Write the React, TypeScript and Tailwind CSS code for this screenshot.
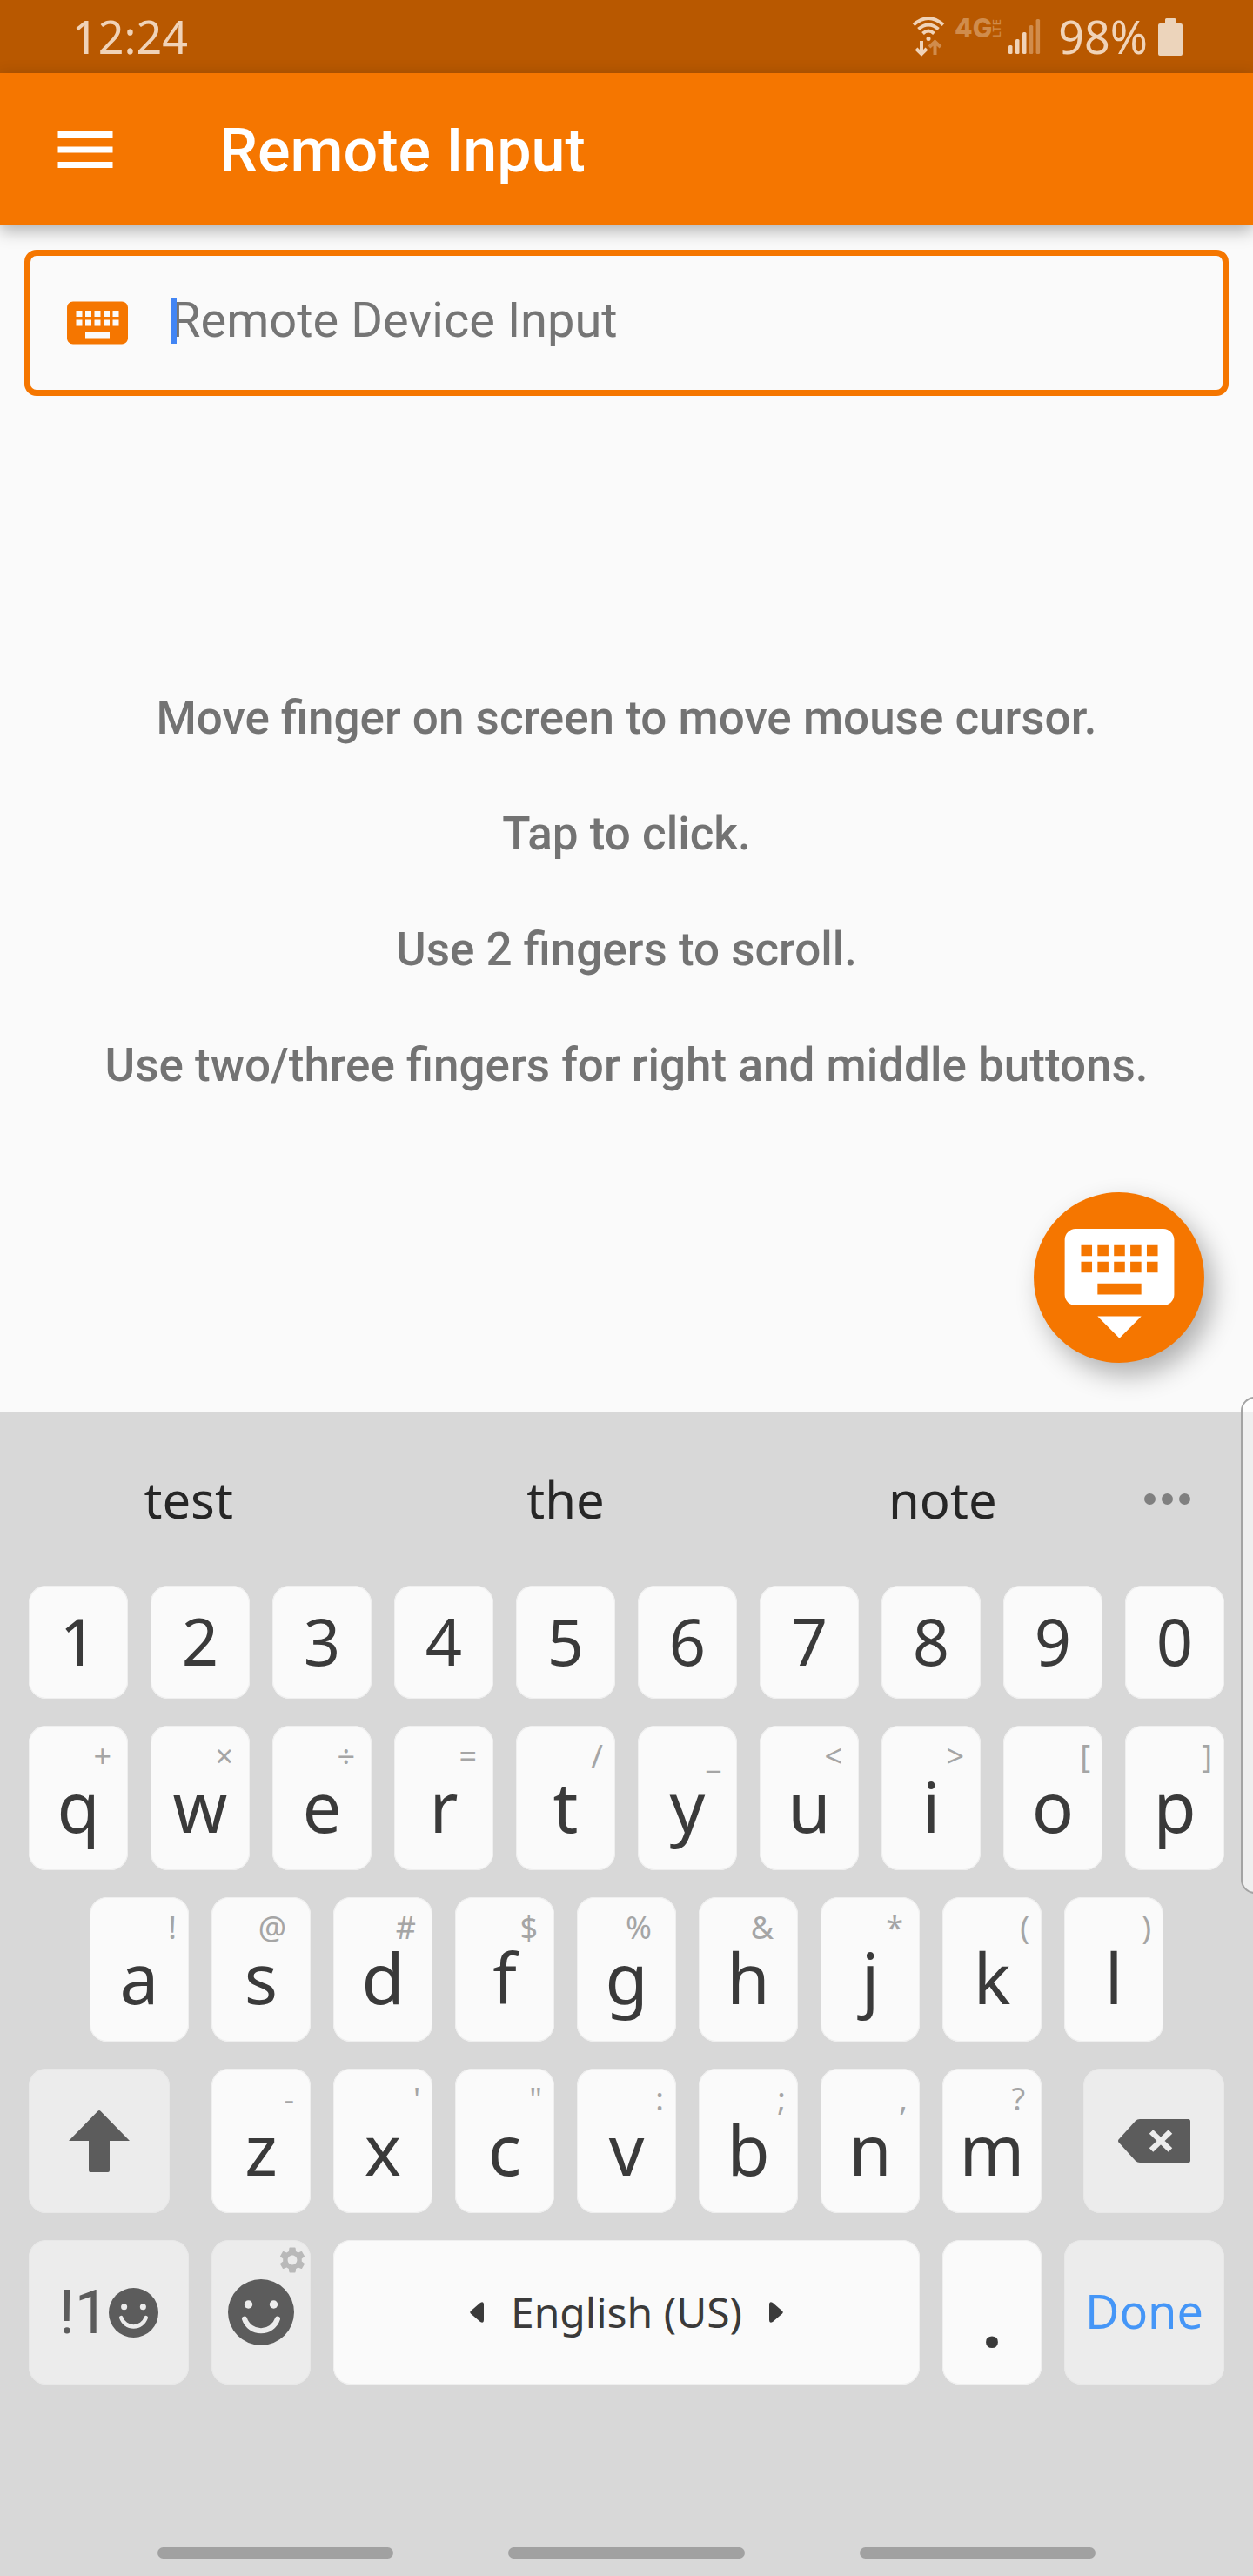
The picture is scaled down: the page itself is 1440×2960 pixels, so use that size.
import React from "react";
import { MdKeyboard, MdKeyboardHide, MdMenu, MdSettings } from "react-icons/md";

type LetterKey = { label: string; hint?: string };

const digits = ["1", "2", "3", "4", "5", "6", "7", "8", "9", "0"];

const topRow: LetterKey[] = [
  { label: "q", hint: "+" },
  { label: "w", hint: "×" },
  { label: "e", hint: "÷" },
  { label: "r", hint: "=" },
  { label: "t", hint: "/" },
  { label: "y", hint: "_" },
  { label: "u", hint: "<" },
  { label: "i", hint: ">" },
  { label: "o", hint: "[" },
  { label: "p", hint: "]" },
];

const homeRow: LetterKey[] = [
  { label: "a", hint: "!" },
  { label: "s", hint: "@" },
  { label: "d", hint: "#" },
  { label: "f", hint: "$" },
  { label: "g", hint: "%" },
  { label: "h", hint: "&" },
  { label: "j", hint: "*" },
  { label: "k", hint: "(" },
  { label: "l", hint: ")" },
];

const bottomRow: LetterKey[] = [
  { label: "z", hint: "-" },
  { label: "x", hint: "'" },
  { label: "c", hint: '"' },
  { label: "v", hint: ":" },
  { label: "b", hint: ";" },
  { label: "n", hint: "," },
  { label: "m", hint: "?" },
];

const instructions = [
  "Move finger on screen to move mouse cursor.",
  "Tap to click.",
  "Use 2 fingers to scroll.",
  "Use two/three fingers for right and middle buttons.",
];

// Hints sit further from the key's edge the wider their glyph is.
function hintInset(hint: string) {
  if ("@%&".includes(hint)) return "right-[28px]";
  if ("!/[]():;,'\"".includes(hint)) return "right-[14px]";
  return "right-[19px]";
}

function Letter({ label, hint }: LetterKey) {
  return (
    <button
      type="button"
      className="relative flex h-[166px] min-w-0 flex-[114_1_0%] items-center justify-center rounded-[20px] bg-[#fafafa] pt-[18px] text-[80px] leading-none text-[#3a3a3a] inset-ring inset-ring-[#efefef]"
    >
      {hint && (
        <span className={`absolute top-[17px] text-[36px] leading-none text-[#a5a5a5] ${hintInset(hint)}`}>{hint}</span>
      )}
      {label === "." ? <b>.</b> : label}
    </button>
  );
}

function Smiley({ className }: { className: string }) {
  return (
    <svg viewBox="0 0 76 76" className={className} aria-hidden="true">
      <circle cx="38" cy="38" r="38" fill="#5c5c5c" />
      <circle cx="23.5" cy="29" r="4.7" fill="#ececec" />
      <circle cx="52.5" cy="29" r="4.7" fill="#ececec" />
      <path d="M19 45.500A20 20 0 0 0 57 45.500" fill="none" stroke="#ececec" strokeWidth="6" strokeLinecap="round" />
    </svg>
  );
}

function WifiIcon() {
  return (
    <svg viewBox="0 0 38 48" className="h-[48px] w-[38px]" aria-label="Wi-Fi">
      <g fill="none" stroke="#f0d3b8" strokeWidth="4">
        <path d="M2 10.500Q19 -4.500 36 10.500" />
        <path d="M7.500 15.500Q19 5.500 30.500 15.500" />
        <path d="M12.500 20.500Q19 14.500 25.500 20.500" />
      </g>
      <circle cx="19" cy="26.500" r="2.500" fill="#f0d3b8" />
      <path d="M11 29V44M5 38L11 44L17 38" fill="none" stroke="#f0d3b8" strokeWidth="4" />
      <path d="M26.500 45V31M20 36L26.500 30L33 36" fill="none" stroke="#d08c4c" strokeWidth="4" />
    </svg>
  );
}

function SignalIcon() {
  return (
    <svg viewBox="0 0 38 42" className="h-[42px] w-[38px]" aria-label="Signal strength">
      <rect x="1" y="31" width="4.500" height="10" rx="1.500" fill="#f0d3b8" />
      <rect x="9" y="24" width="4.500" height="17" rx="1.500" fill="#f0d3b8" />
      <rect x="17" y="16" width="4.500" height="25" rx="1.500" fill="#f0d3b8" />
      <rect x="24.800" y="8" width="4.500" height="33" rx="1.500" fill="#d08c4c" />
      <rect x="32.600" y="1" width="4.500" height="40" rx="1.500" fill="#d08c4c" />
    </svg>
  );
}

function StatusBar() {
  return (
    <div className="flex h-[84px] items-center justify-between bg-[#b85800] pr-[81px] pl-[83px] font-['Noto_Sans'] text-[52px] leading-none text-[#f0d3b8]">
      <span>12:24</span>
      <div className="flex items-center">
        <WifiIcon />
        <span className="ml-[11px] flex items-center pb-[20px] text-[#d08c4c]">
          <span className="font-['Inter'] text-[30px] leading-none font-extrabold">4G</span>
          <span className="rotate-180 font-['Inter'] text-[12px] leading-none font-medium [writing-mode:vertical-rl]">LTE</span>
        </span>
        <span className="ml-[6px]">
          <SignalIcon />
        </span>
        <span className="ml-[20px]">98%</span>
        <svg viewBox="0 0 28 43" className="ml-[12px] h-[43px] w-[28px]" aria-label="Battery">
          <path
            d="M8 1.500Q8 0 9.500 0H19Q20.500 0 20.500 1.500V6H26Q28 6 28 8V41Q28 43 26 43H2Q0 43 0 41V8Q0 6 2 6H8Z"
            fill="#ecd4bb"
          />
        </svg>
      </div>
    </div>
  );
}

function Keyboard() {
  const row = "flex gap-[26px]";
  const softKey =
    "relative flex h-[166px] items-center justify-center rounded-[20px] bg-[#ececec] inset-ring inset-ring-[#e8e8e8]";
  return (
    <section aria-label="Keyboard" className="bg-[#d8d8d8] font-['Noto_Sans',sans-serif]">
      <div className="flex h-[200px] items-center text-[58px] text-[#262626]">
        {["test", "the", "note"].map((word) => (
          <button key={word} type="button" className="min-w-0 flex-1">
            {word}
          </button>
        ))}
        <button type="button" aria-label="More suggestions" className="mr-[56px] flex w-[84px] justify-center gap-[7px]">
          <span className="size-[13px] rounded-full bg-[#808080]" />
          <span className="size-[13px] rounded-full bg-[#808080]" />
          <span className="size-[13px] rounded-full bg-[#808080]" />
        </button>
      </div>

      <div className="flex flex-col gap-[31px] px-[33px]">
        <div className={row}>
          {digits.map((digit) => (
            <button
              key={digit}
              type="button"
              className="flex h-[130px] min-w-0 flex-1 items-center justify-center rounded-[20px] bg-[#fafafa] pb-[3px] text-[74px] leading-none text-[#3a3a3a] inset-ring inset-ring-[#efefef]"
            >
              {digit}
            </button>
          ))}
        </div>

        <div className={row}>
          {topRow.map((key) => (
            <Letter key={key.label} {...key} />
          ))}
        </div>

        <div className={row}>
          <span className="flex-[44_1_0%]" />
          {homeRow.map((key) => (
            <Letter key={key.label} {...key} />
          ))}
          <span className="flex-[44_1_0%]" />
        </div>

        <div className={row}>
          <button type="button" aria-label="Shift" className={`${softKey} mr-[22px] flex-[162_1_0%]`}>
            <svg viewBox="0 0 70 71" className="h-[71px] w-[70px]" aria-hidden="true">
              <path
                d="M33.500 0.700Q35 -0.500 36.500 0.700L70 35H47V69Q47 71 45 71H25Q23 71 23 69V35H0Z"
                fill="#5c5c5c"
              />
            </svg>
          </button>
          {bottomRow.map((key) => (
            <Letter key={key.label} {...key} />
          ))}
          <button type="button" aria-label="Backspace" className={`${softKey} ml-[22px] flex-[162_1_0%]`}>
            <svg viewBox="0 0 83 50" className="h-[50px] w-[83px]" aria-hidden="true">
              <path
                d="M0.500 26.500Q-0.500 25 0.500 23.500L20 2Q22 0 25 0H80.500Q83 0 83 2.500V47.500Q83 50 80.500 50H25Q22 50 20 48Z"
                fill="#5c5c5c"
              />
              <path d="M38 14.500L60 35.500M60 14.500L38 35.500" stroke="#ececec" strokeWidth="6.500" />
            </svg>
          </button>
        </div>

        <div className={row}>
          <button
            type="button"
            aria-label="Symbols and emoji"
            className={`${softKey} flex-[184_1_0%] font-['Roboto'] text-[70px] leading-none text-[#5c5c5c]`}
          >
            !1
            <Smiley className="size-[57px]" />
          </button>
          <button type="button" aria-label="Emoji" className={`${softKey} flex-[114_1_0%]`}>
            <MdSettings className="absolute top-[5px] right-[3px] size-[36px] text-[#b9b9b9]" />
            <Smiley className="size-[76px]" />
          </button>
          <button
            type="button"
            className="flex h-[166px] flex-[674_1_0%] items-center justify-center gap-[31px] rounded-[20px] bg-[#fafafa] text-[48px] text-[#3a3a3a] inset-ring inset-ring-[#efefef]"
          >
            <svg viewBox="0 0 16 24" className="h-[24px] w-[16px]" aria-hidden="true">
              <path d="M1 10.500L12 1Q16 -1 16 3V21Q16 25 12 23L1 13.500Q-0.500 12 1 10.500Z" fill="#3a3a3a" />
            </svg>
            English (US)
            <svg viewBox="0 0 16 24" className="h-[24px] w-[16px]" aria-hidden="true">
              <path d="M15 10.500L4 1Q0 -1 0 3V21Q0 25 4 23L15 13.500Q16.500 12 15 10.500Z" fill="#3a3a3a" />
            </svg>
          </button>
          <Letter label="." />
          <button type="button" className={`${softKey} flex-[184_1_0%] pb-[3px] text-[54px] text-[#4596f7]`}>
            Done
          </button>
        </div>
      </div>

      <nav aria-label="System navigation" className="mt-[187px] flex gap-[132px] px-[181px] pb-[20px]">
        {["Recents", "Home", "Back"].map((name) => (
          <button key={name} type="button" aria-label={name} className="h-[13px] flex-1 rounded-full bg-[#a1a1a1]" />
        ))}
      </nav>
    </section>
  );
}

export default function App() {
  return (
    <div className="relative flex min-h-screen flex-col overflow-hidden bg-[#fafafa] font-['Roboto',sans-serif]">
      <StatusBar />
      <header className="flex h-[175px] items-center bg-[#f57600] pl-[56px] text-white shadow-[0_6px_18px_rgba(0,0,0,0.3)]">
        <button type="button" aria-label="Open menu">
          <MdMenu className="size-[84px]" />
        </button>
        <h1 className="ml-[112px] pt-[3px] text-[70px] leading-none font-medium">Remote Input</h1>
      </header>

      <main className="flex flex-1 flex-col px-[28px] pt-[28px]">
        <label className="flex h-[168px] items-center rounded-[14px] border-[7px] border-[#f57600] pr-[28px] pl-[35px]">
          <MdKeyboard className="size-[84px] text-[#f57600]" />
          <span className="relative ml-[42px] flex min-w-0 flex-1 items-center pb-[6px]">
            <span className="absolute left-0 h-[53px] w-[7px] bg-[#4285f4]" />
            <input
              type="text"
              aria-label="Remote Device Input"
              placeholder="Remote Device Input"
              className="w-full bg-transparent text-[56px] text-[#3a3a3a] caret-[#4285f4] outline-none placeholder:text-[#757575]"
            />
          </span>
        </label>

        <div className="mt-[340px] flex flex-col gap-[72px] text-center text-[53px] leading-[61px] font-medium text-[#737373]">
          {instructions.map((line) => (
            <p key={line}>{line}</p>
          ))}
        </div>

        <button
          type="button"
          aria-label="Hide keyboard"
          className="mt-[115px] mr-[28px] mb-[56px] flex size-[196px] items-center justify-center self-end rounded-full bg-[#f57600] text-white shadow-[10px_14px_30px_rgba(0,0,0,0.3)]"
        >
          <MdKeyboardHide className="size-[151px]" />
        </button>
      </main>

      <Keyboard />

      <div className="absolute top-[1605px] -right-[10px] h-[571px] w-[24px] rounded-l-[16px] border-2 border-[#a3a3a3] bg-white/60" />
    </div>
  );
}
